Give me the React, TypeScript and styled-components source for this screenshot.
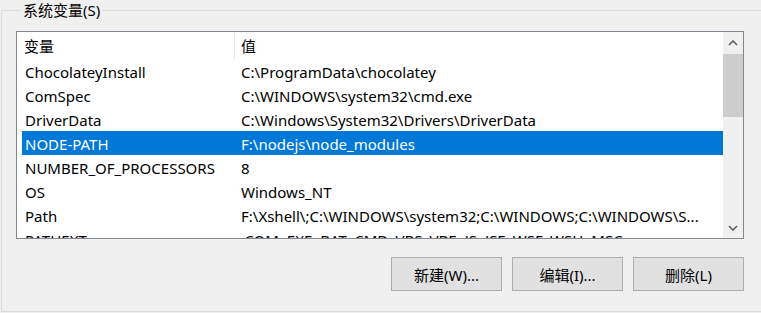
import React from "react";
import styled, { createGlobalStyle } from "styled-components";

const Global = createGlobalStyle`
  html, body { margin: 0; padding: 0; background: #f0f0f0; overflow: hidden; }
  body { width: 761px; height: 313px; font-family: "Noto Sans", "Noto Sans CJK SC", sans-serif; font-size: 15px; color: #000; }
`;

const Group = styled.fieldset`
  margin: 0 0 0 1px;
  padding: 0 0 0 14px;
  width: 800px;
  height: 312px;
  box-sizing: border-box;
  border: 1px solid #dcdcdc;
  min-width: 0;
`;

const Legend = styled.legend`
  margin-left: 5px;
  padding: 0 2px;
  line-height: 20px;
  font-size: 15px;
`;

const Body = styled.div`
  padding-top: 11px;
  width: 728px;
`;

const ListView = styled.div`
  display: flex;
  width: 728px;
  height: 208px;
  box-sizing: border-box;
  border: 1px solid #828790;
  background: #fff;
`;

const TableArea = styled.div`
  flex: 1;
  overflow: hidden;
  min-width: 0;
`;

const Header = styled.div`
  display: flex;
  height: 27px;
  align-items: stretch;
`;

const HeaderCell = styled.div<{ $w?: number; $pl: number; $sep?: boolean }>`
  ${(p) => (p.$w ? `width: ${p.$w}px;` : "flex: 1;")}
  padding-left: ${(p) => p.$pl}px;
  box-sizing: border-box;
  display: flex;
  align-items: center;
  ${(p) => (p.$sep ? "border-right: 1px solid #e5e5e5;" : "")}
`;

const Row = styled.div<{ $sel?: boolean }>`
  display: grid;
  grid-template-columns: 216px 1fr;
  height: 24px;
  margin-left: 5px;
  align-items: center;
  background: ${(p) => (p.$sel ? "#0078d7" : "transparent")};
  color: ${(p) => (p.$sel ? "#fff" : "#000")};
`;

const Cell = styled.div`
  padding: 2px 0 0 3px;
  white-space: nowrap;
  overflow: hidden;
`;

const Scrollbar = styled.div`
  width: 20px;
  background: #f0f0f0;
  display: flex;
  flex-direction: column;
`;

const ArrowBtn = styled.div<{ $h: number }>`
  height: ${(p) => p.$h}px;
  display: flex;
  align-items: center;
  justify-content: center;
`;

const Thumb = styled.div`
  height: 63px;
  background: #cdcdcd;
`;

const Track = styled.div`
  flex: 1;
`;

const Buttons = styled.div`
  display: flex;
  justify-content: flex-end;
  gap: 10px;
  margin-top: 18px;
`;

const Button = styled.button`
  width: 111px;
  height: 34px;
  box-sizing: border-box;
  background: #e1e1e1;
  border: 1px solid #adadad;
  font-family: inherit;
  font-size: 15px;
  color: #000;
  padding: 0;
`;

const Chevron = ({ down }: { down?: boolean }) => (
  <svg width="10" height="6" viewBox="0 0 10 6">
    <path
      d={down ? "M1 1 L5 5 L9 1" : "M1 5 L5 1 L9 5"}
      fill="none"
      stroke="#606060"
      strokeWidth="1.6"
    />
  </svg>
);

const rows: [string, string][] = [
  ["ChocolateyInstall", "C:\\ProgramData\\chocolatey"],
  ["ComSpec", "C:\\WINDOWS\\system32\\cmd.exe"],
  ["DriverData", "C:\\Windows\\System32\\Drivers\\DriverData"],
  ["NODE-PATH", "F:\\nodejs\\node_modules"],
  ["NUMBER_OF_PROCESSORS", "8"],
  ["OS", "Windows_NT"],
  ["Path", "F:\\Xshell\\;C:\\WINDOWS\\system32;C:\\WINDOWS;C:\\WINDOWS\\S..."],
  ["PATHEXT", ".COM;.EXE;.BAT;.CMD;.VBS;.VBE;.JS;.JSE;.WSF;.WSH;.MSC"],
];

export default function App() {
  return (
    <>
      <Global />
      <Group>
        <Legend>系统变量(S)</Legend>
        <Body>
          <ListView>
            <TableArea>
              <Header>
                <HeaderCell $w={218} $pl={7} $sep>
                  变量
                </HeaderCell>
                <HeaderCell $pl={6}>值</HeaderCell>
              </Header>
              {rows.map(([k, v]) => (
                <Row key={k} $sel={k === "NODE-PATH"}>
                  <Cell>{k}</Cell>
                  <Cell>{v}</Cell>
                </Row>
              ))}
            </TableArea>
            <Scrollbar>
              <ArrowBtn $h={22}>
                <Chevron />
              </ArrowBtn>
              <Thumb />
              <Track />
              <ArrowBtn $h={21}>
                <Chevron down />
              </ArrowBtn>
            </Scrollbar>
          </ListView>
          <Buttons>
            <Button>新建(W)...</Button>
            <Button>编辑(I)...</Button>
            <Button>删除(L)</Button>
          </Buttons>
        </Body>
      </Group>
    </>
  );
}
